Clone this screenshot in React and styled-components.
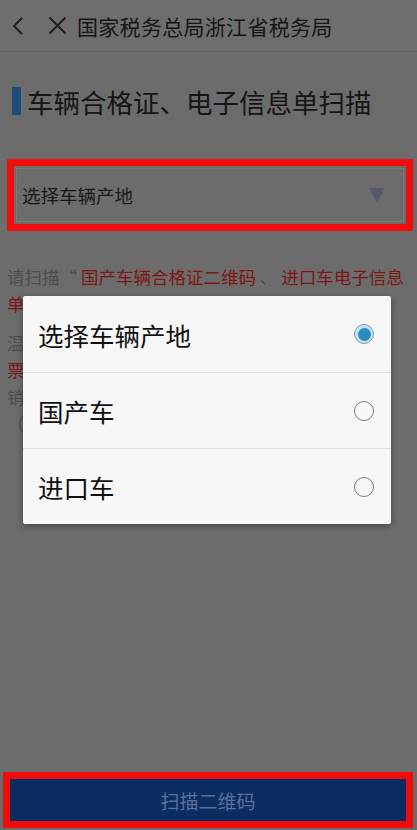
import React from 'react'
import styled, { createGlobalStyle } from 'styled-components'

const GlobalStyle = createGlobalStyle`
  html, body {
    margin: 0;
    padding: 0;
    background: #6c6c6c;
    font-family: "Noto Sans CJK SC", "Noto Sans", sans-serif;
  }
`

const Page = styled.div`
  position: relative;
  width: 417px;
  height: 830px;
  overflow: hidden;
  display: flex;
  flex-direction: column;
  background: #6c6c6c;
`
const TitleBar = styled.div`
  height: 52px;
  display: flex;
  align-items: center;
  border-bottom: 1px solid #646464;
  background: #6e6e6e;
  color: #161616;
  box-sizing: border-box;
`
const IconButton = styled.div`
  width: ${(p) => p.w}px;
  display: flex;
  align-items: center;
  justify-content: center;
  margin-left: ${(p) => p.ml}px;
`
const TitleText = styled.div`
  font-size: 21px;
  margin-left: 10px;
  letter-spacing: 0.3px;
`
const Heading = styled.div`
  display: flex;
  align-items: center;
  margin: 34px 0 0 12px;
  height: 30px;
`
const HeadingBar = styled.div`
  width: 9px;
  height: 28px;
  background: #1b4c7c;
  margin-right: 6px;
`
const HeadingText = styled.div`
  font-size: 26.5px;
  color: #161616;
`
const Marked = styled.div`
  margin: ${(p) => p.m};
  border: 7px solid #f20d0d;
  box-sizing: border-box;
`
const SelectBox = styled.div`
  height: 52px;
  border: 1px solid #7a7a7a;
  margin: 2px;
  display: flex;
  align-items: center;
  justify-content: space-between;
  padding: 0 18px 0 5px;
  font-size: 18.5px;
  color: #1a1a1a;
`
const Triangle = styled.div`
  width: 0;
  height: 0;
  border-left: 8px solid transparent;
  border-right: 8px solid transparent;
  border-top: 14px solid #55596b;
`
const Paragraph = styled.p`
  margin: ${(p) => p.m};
  padding: 0 7px;
  font-size: 17.5px;
  line-height: 27px;
  color: #4e4e4e;
  white-space: nowrap;
`
const Red = styled.span`
  color: #7d1717;
`
const Spacer = styled.div`
  flex: 1;
`
const ScanButton = styled.div`
  height: 42px;
  background: #0b2d62;
  color: #5b7198;
  font-size: 19px;
  display: flex;
  align-items: center;
  justify-content: center;
`
const Dialog = styled.div`
  position: absolute;
  left: 23px;
  top: 296px;
  width: 368px;
  background: #f7f7f7;
  border-radius: 2px;
  box-shadow: 0 2px 6px rgba(0, 0, 0, 0.35);
`
const Option = styled.div`
  height: 76px;
  display: flex;
  align-items: center;
  justify-content: space-between;
  padding: 0 17px 0 15px;
  font-size: 25.5px;
  color: #111;
  border-top: ${(p) => (p.first ? 'none' : '1px solid #dedede')};
  box-sizing: border-box;
`
const Radio = styled.div`
  width: 20px;
  height: 20px;
  border-radius: 50%;
  border: 1px solid ${(p) => (p.checked ? '#8a9aa4' : '#7a7a7a')};
  background: ${(p) => (p.checked ? '#bfe4f5' : 'transparent')};
  display: flex;
  align-items: center;
  justify-content: center;
  box-sizing: border-box;
  &::after {
    content: '';
    display: ${(p) => (p.checked ? 'block' : 'none')};
    width: 13px;
    height: 13px;
    border-radius: 50%;
    background: #2a8bbf;
  }
`

const options = ['选择车辆产地', '国产车', '进口车']

export default function App() {
  return (
    <Page>
      <GlobalStyle />
      <TitleBar>
        <IconButton w={14} ml={11}>
          <svg width="12" height="20" viewBox="0 0 12 20">
            <path d="M10 2 L2 10 L10 18" fill="none" stroke="#1c1c1c" strokeWidth="1.8" />
          </svg>
        </IconButton>
        <IconButton w={20} ml={22}>
          <svg width="19" height="19" viewBox="0 0 19 19">
            <path d="M1.5 1.5 L17.5 17.5 M17.5 1.5 L1.5 17.5" stroke="#1c1c1c" strokeWidth="1.8" />
          </svg>
        </IconButton>
        <TitleText>国家税务总局浙江省税务局</TitleText>
      </TitleBar>
      <Heading>
        <HeadingBar />
        <HeadingText>车辆合格证、电子信息单扫描</HeadingText>
      </Heading>
      <Marked m="43px 4px 0 7px">
        <SelectBox>
          <span>选择车辆产地</span>
          <Triangle />
        </SelectBox>
      </Marked>
      <Paragraph m="32px 0 0">
        请扫描“ <Red>国产车辆合格证二维码</Red> 、 <Red>进口车电子信息</Red>
        <br />
        <Red>单</Red>”二维码，系统将自动带出车辆信息。
      </Paragraph>
      <Paragraph m="12px 0 0">
        温馨提示：如您已取得<Red>机动车销售统一发</Red>
        <br />
        <Red>票</Red>，请核对发票信息与车辆信息是否一致，若不满
        <br />
        销售单位应重新开具发票，否则无法办理申报
        <br />
        （如已开具发票请忽略）。
      </Paragraph>
      <Spacer />
      <Marked m="0 4px 2px 3px">
        <ScanButton>扫描二维码</ScanButton>
      </Marked>
      <Dialog>
        {options.map((o, i) => (
          <Option key={o} first={i === 0}>
            <span>{o}</span>
            <Radio checked={i === 0} />
          </Option>
        ))}
      </Dialog>
    </Page>
  )
}
